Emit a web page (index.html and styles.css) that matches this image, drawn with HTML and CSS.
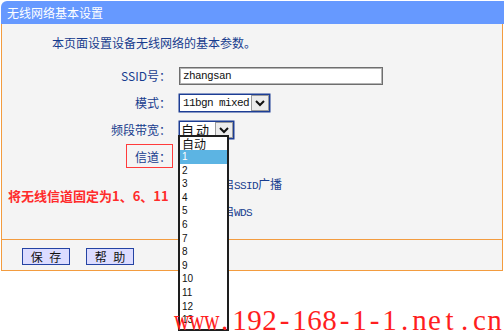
FILE: index.html
```html
<!DOCTYPE html>
<html lang="zh-CN">
<head>
<meta charset="utf-8">
<title>无线网络基本设置</title>
<link rel="stylesheet" href="styles.css">
</head>
<body>
<div class="page">
  <div class="hd">无线网络基本设置</div>
  <div class="panel">
    <div class="sec main">
      <p class="intro">本页面设置设备无线网络的基本参数。</p>
      <div class="form">
        <div class="lbl">SSID号：</div>
        <div class="ctl"><div class="input"><span class="mono">zhangsan</span></div></div>

        <div class="lbl">模式：</div>
        <div class="ctl">
          <div class="sel sel-mode"><span class="val mono">11bgn mixed</span><span class="arr"><svg width="12" height="8" viewBox="0 0 12 8"><polyline points="2,2 6,6 10,2" fill="none" stroke="#111" stroke-width="2"/></svg></span></div>
        </div>

        <div class="lbl">频段带宽：</div>
        <div class="ctl">
          <div class="sel sel-bw"><span class="val big">自动</span><span class="arr"><svg width="12" height="8" viewBox="0 0 12 8"><polyline points="2,2 6,6 10,2" fill="none" stroke="#111" stroke-width="2"/></svg></span>
            <ul class="list">
              <li class="cjk">自动</li>
              <li class="on">1</li>
              <li>2</li><li>3</li><li>4</li><li>5</li><li>6</li><li>7</li><li>8</li><li>9</li><li>10</li><li>11</li><li>12</li><li>13</li>
            </ul>
          </div>
        </div>

        <div class="lbl">信道：</div>
        <div class="ctl"><div class="sel sel-ch"><span class="val">1</span><span class="arr"></span></div></div>

        <div class="lbl"></div>
        <div class="ctl"><span class="cb"></span><span class="cbt">开启<span class="mono">SSID</span>广播</span></div>

        <div class="lbl"></div>
        <div class="ctl"><span class="cb"></span><span class="cbt">开启<span class="mono">WDS</span></span></div>
      </div>
    </div>
    <div class="sec btns">
      <button class="btn">保 存</button>
      <button class="btn">帮 助</button>
    </div>
  </div>
</div>
<div class="note">将无线信道固定为1、6、11</div>
<div class="mark"></div>
<div class="wm"><span class="w">w</span><span class="w">w</span><span class="w">w</span><span>.</span><span>1</span><span>9</span><span>2</span><span>-</span><span>1</span><span>6</span><span>8</span><span>-</span><span>1</span><span>-</span><span>1</span><span>.</span><span>n</span><span>e</span><span>t</span><span>.</span><span>c</span><span>n</span></div>
</body>
</html>
```
FILE: styles.css
```css
html, body {
  margin: 0;
  padding: 0;
  background: #ffffff;
}
body {
  position: relative;
  width: 504px;
  height: 336px;
  overflow: hidden;
  font-family: "Noto Sans CJK SC", "Liberation Sans", sans-serif;
  font-size: 12px;
}
.page {
  margin: 1px 0 0 1px;
  width: 503px;
}
.hd {
  height: 23px;
  line-height: 23px;
  background: #6699ff;
  color: #ffffff;
  border-radius: 6px 0 0 0;
  padding-left: 6px;
  font-size: 12px;
}
.panel {
  width: 502px;
  box-sizing: border-box;
  border-left: 1px solid #f39c3f;
  border-right: 1px solid #f39c3f;
  border-bottom: 1px solid #f39c3f;
  background: #f4f4f4;
}
.sec.main {
  height: 216px;
  box-sizing: border-box;
  padding: 10px 0 15px 0;
  border-bottom: 1px solid #f39c3f;
}
.intro {
  margin: 0 0 10px 0;
  padding-left: 50px;
  line-height: 18px;
  color: #173c8e;
}
.form {
  display: grid;
  grid-template-columns: 169px 1fr;
  column-gap: 8px;
  grid-auto-rows: 27px;
  align-items: center;
}
.lbl {
  text-align: right;
  color: #173c8e;
  white-space: nowrap;
}
.ctl {
  display: flex;
  align-items: center;
}
.mono {
  font-family: "Liberation Mono", monospace;
  font-size: 11px;
  letter-spacing: -0.6px;
}
.input {
  width: 204px;
  height: 18px;
  box-sizing: border-box;
  border: 1px solid #6e6e6e;
  box-shadow: inset 0 0 0 1px #b4b4b4;
  background: #ffffff;
  display: flex;
  align-items: center;
  padding-left: 3px;
  color: #111;
}
.sel {
  position: relative;
  display: flex;
  align-items: center;
  height: 18px;
  box-sizing: border-box;
  border: 1px solid #1c3d94;
  box-shadow: 0 0 0 0.5px #1c3d94;
  background: #ffffff;
  color: #111;
}
.sel .val {
  flex: 1;
  padding-left: 3px;
  white-space: nowrap;
  overflow: hidden;
}
.sel .val.big {
  font-size: 13px;
  letter-spacing: 2px;
  padding-left: 1px;
}
.arr {
  width: 18px;
  height: 16px;
  box-sizing: border-box;
  border: 1px solid #9a9a9a;
  background: #ececec;
  display: flex;
  align-items: center;
  justify-content: center;
}
.sel-mode { width: 91px; }
.sel-bw { width: 55px; }
.sel-ch { width: 47px; }
.list {
  position: absolute;
  left: -2px;
  top: 13px;
  width: 51px;
  height: 196px;
  box-sizing: border-box;
  margin: 0;
  padding: 0;
  list-style: none;
  border: 2px solid #1e1e1e;
  background: #ffffff;
  overflow: hidden;
  z-index: 5;
}
.list li {
  height: 13.6px;
  line-height: 13.6px;
  padding-left: 2px;
  font-family: "Liberation Sans", sans-serif;
  font-size: 10px;
  color: #111;
}
.list li.cjk {
  font-family: "Noto Sans CJK SC", sans-serif;
  font-size: 12px;
}
.list li.on {
  background: #5cb4e3;
  color: #ffffff;
}
.cb {
  width: 13px;
  height: 13px;
  box-sizing: border-box;
  border: 1px solid #1c3d94;
  background: #fff;
  margin: 0 16px 0 2px;
}
.cbt {
  color: #173c8e;
  white-space: nowrap;
}
.sec.btns {
  height: 30px;
  box-sizing: border-box;
  padding: 8px 0 0 20px;
  display: flex;
  align-items: flex-start;
  gap: 16px;
}
.btn {
  width: 48px;
  height: 17px;
  box-sizing: border-box;
  padding: 0;
  margin: 0;
  border: 1px solid #2443a3;
  background: #dcdcff;
  color: #111;
  font-family: "Noto Sans CJK SC", sans-serif;
  font-size: 12px;
  line-height: 15px;
  word-spacing: 4px;
}
.note {
  position: absolute;
  left: 8px;
  top: 187px;
  line-height: 18px;
  font-size: 13px;
  font-weight: bold;
  color: #ff2b2b;
  white-space: nowrap;
}
.mark {
  position: absolute;
  left: 126px;
  top: 144px;
  width: 47px;
  height: 24px;
  box-sizing: border-box;
  border: 1px solid #ff3b3b;
}
.wm {
  position: absolute;
  left: 172px;
  top: 304px;
  display: flex;
  font-family: "Liberation Serif", serif;
  font-size: 29px;
  line-height: 32px;
  color: #ff1e1e;
  white-space: nowrap;
  z-index: 10;
}
.wm span {
  display: inline-block;
  width: 15px;
  text-align: center;
}
.wm span.w {
  transform: scaleX(0.74);
}
```
